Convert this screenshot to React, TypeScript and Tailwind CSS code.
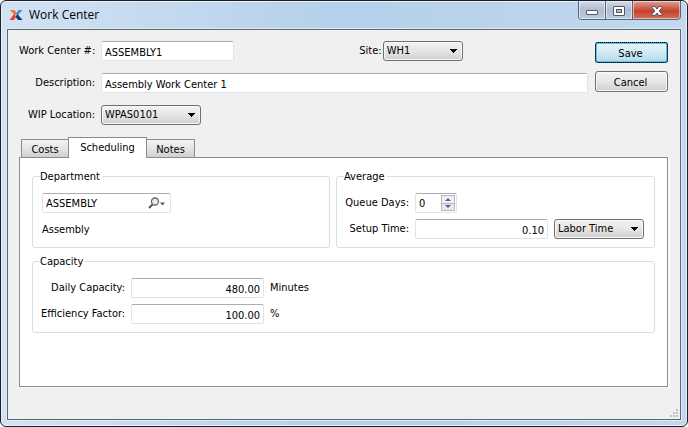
import { useState } from "react";
import type { ReactNode } from "react";

const fieldBase =
  "h-5 min-w-0 rounded-[2px] border border-[#e2e3ea] border-t-[#abadb3] bg-white px-[3px] pt-[2px] text-[11px] leading-4 text-black outline-none";

function Label({ htmlFor, className, children }: { htmlFor: string; className: string; children: ReactNode }) {
  return (
    <label htmlFor={htmlFor} className={`shrink-0 whitespace-nowrap text-right leading-4 ${className}`}>
      {children}
    </label>
  );
}

function Select({ id, value, label, className }: { id: string; value: string; label?: string; className: string }) {
  return (
    <span className={`relative inline-flex h-5 shrink-0 ${className}`}>
      <select
        id={id}
        aria-label={label}
        defaultValue={value}
        className="h-5 w-full appearance-none rounded-[3px] border border-[#707070] bg-linear-to-b from-[#f2f2f2] from-0% via-[#e6e6e6] via-50% to-[#cfcfcf] pl-[3px] pr-4 text-[11px] leading-[18px] text-black shadow-[inset_0_0_0_1px_#f8f8f8] outline-none"
      >
        <option>{value}</option>
      </select>
      <svg className="pointer-events-none absolute right-[6px] top-[8px]" width="7" height="4" viewBox="0 0 7 4" shapeRendering="crispEdges" aria-hidden="true">
        <path d="M0 0h7v1H6v1H5v1H4v1H3V3H2V2H1V1H0z" fill="#000" />
      </svg>
    </span>
  );
}

function Group({ title, children }: { title: string; children: ReactNode }) {
  return (
    <fieldset className="min-w-0 rounded-[3px] border border-[#d5dfe5] px-[7px] pb-2">
      <legend className="h-[14px] pr-[2px] leading-4">{title}</legend>
      <div className="flex flex-col gap-[6px] px-px pt-[10px]">{children}</div>
    </fieldset>
  );
}

function TitleBar() {
  const cap = "flex items-center justify-center border-[#56657a] shadow-[inset_0_0_0_1px_rgba(255,255,255,0.5)]";
  return (
    <header className="flex h-7 items-start">
      <div className="flex h-[26px] flex-1 items-center gap-[6px] pl-[2px] pt-[2px]">
        <svg width="14" height="14" viewBox="0 0 14 14" aria-hidden="true">
          <path d="M1 2h4.500l2.500 3.500-2 2z" fill="#f0763c" />
          <path d="M6.500 6.200 9.500 2H13.500L9 7z" fill="#3d93c8" />
          <path d="M5 6 7 8.700 5 12H.5z" fill="#e04329" />
          <path d="M8.500 6 13.500 12H9L6.500 8.700z" fill="#1b3a6b" />
        </svg>
        <h1 className="font-['Open_Sans','Noto_Sans',sans-serif] text-[12px] leading-4">Work Center</h1>
      </div>
      <div className="flex h-[19px] overflow-hidden rounded-b-[4px] border border-t-0 border-[#56657a]">
        <button type="button" aria-label="Minimize" className={`${cap} w-[27px] border-r bg-linear-to-b from-[#d3dce8] via-[#aebdd0] via-50% to-[#b9cce2]`}>
          <svg width="12" height="6" viewBox="0 0 12 6" className="mt-[5px]" aria-hidden="true">
            <rect x=".5" y=".5" width="11" height="4" rx=".5" fill="#fff" stroke="#535666" />
          </svg>
        </button>
        <button type="button" aria-label="Maximize" className={`${cap} w-[27px] border-r bg-linear-to-b from-[#d3dce8] via-[#aebdd0] via-50% to-[#b9cce2]`}>
          <svg width="12" height="10" viewBox="0 0 12 10" className="mt-px" aria-hidden="true">
            <rect x=".5" y=".5" width="11" height="9" rx=".5" fill="#fff" stroke="#535666" />
            <rect x="3.500" y="3.500" width="5" height="3" fill="#a9bbd0" stroke="#535666" />
          </svg>
        </button>
        <button type="button" aria-label="Close" className={`${cap} w-[47px] bg-linear-to-b from-[#e0a195] from-0% via-[#c4402b] via-55% to-[#d5705a]`}>
          <svg width="12" height="10" viewBox="0 0 12 10" className="mt-px" aria-hidden="true">
            <path d="M1 .5h3L6 3 8 .5h3v1L8.200 5 11 8.500v1H8L6 7 4 9.500H1v-1L3.800 5 1 1.500z" fill="#fff" stroke="#535666" />
          </svg>
        </button>
      </div>
    </header>
  );
}

function Form() {
  return (
    <div className="flex min-w-0 flex-1 flex-col gap-3">
      <div className="flex items-center">
        <Label htmlFor="wc" className="mr-[6px] w-[76px]">Work Center #:</Label>
        <input id="wc" type="text" defaultValue="ASSEMBLY1" className={`${fieldBase} w-[133px]`} />
        <div className="flex flex-1 items-center justify-center">
          <Label htmlFor="site" className="mr-px">Site:</Label>
          <Select id="site" value="WH1" className="w-20" />
        </div>
      </div>
      <div className="flex items-center">
        <Label htmlFor="desc" className="mr-[6px] w-[76px]">Description:</Label>
        <input id="desc" type="text" defaultValue="Assembly Work Center 1" className={`${fieldBase} flex-1`} />
      </div>
      <div className="flex items-center">
        <Label htmlFor="wip" className="mr-[6px] w-[76px]">WIP Location:</Label>
        <Select id="wip" value="WPAS0101" className="w-[100px]" />
      </div>
    </div>
  );
}

function Scheduling() {
  return (
    <div role="tabpanel" aria-label="Scheduling" className="flex flex-1 flex-col gap-[6px] border border-[#898c95] bg-white px-3 pt-[11px] shadow-[2px_1px_0_#fcfcfc]">
      <div className="grid grid-cols-[298fr_319fr] gap-[6px]">
        <Group title="Department">
          <div className="ml-px flex h-5 w-[129px] items-center rounded-[2px] border border-[#e2e3ea] border-t-[#abadb3] pr-1">
            <input type="text" aria-label="Department" defaultValue="ASSEMBLY" className="min-w-0 flex-1 bg-transparent pl-[3px] pt-[2px] text-[11px] leading-4 outline-none" />
            <button type="button" aria-label="Look up department">
              <svg width="18" height="12" viewBox="0 0 18 12" aria-hidden="true">
                <path d="M1 11 5 7" stroke="#555" strokeWidth="2" />
                <circle cx="7" cy="4.500" r="3.500" fill="#e6eaea" stroke="#666" strokeWidth="1.300" />
                <path d="M12 5.500h5l-2.500 3z" fill="#555" />
              </svg>
            </button>
          </div>
          <p className="ml-px h-5 leading-[22px]">Assembly</p>
        </Group>
        <Group title="Average">
          <div className="flex items-center">
            <Label htmlFor="queue" className="mr-[6px] w-16">Queue Days:</Label>
            <div className="flex h-5 w-[42px] rounded-[2px] border border-[#e2e3ea] border-t-[#abadb3]">
              <input id="queue" type="text" defaultValue="0" className="min-w-0 flex-1 bg-transparent pl-[3px] pt-[2px] text-[11px] leading-4 outline-none" />
              <div className="my-px mr-px flex w-[14px] flex-col border border-[#b5b8bd]">
                <button type="button" aria-label="Increase" className="flex flex-1 items-center justify-center border-b border-[#b5b8bd] bg-[#f1f1f1]">
                  <svg width="6" height="3" viewBox="0 0 6 3" aria-hidden="true"><path d="M0 3 3 0l3 3z" fill="#4a61b0" /></svg>
                </button>
                <button type="button" aria-label="Decrease" className="flex flex-1 items-center justify-center bg-[#e9e9e9]">
                  <svg width="6" height="3" viewBox="0 0 6 3" aria-hidden="true"><path d="M0 0h6L3 3z" fill="#4a61b0" /></svg>
                </button>
              </div>
            </div>
          </div>
          <div className="flex items-center">
            <Label htmlFor="setup" className="mr-[6px] w-16">Setup Time:</Label>
            <input id="setup" type="text" defaultValue="0.10" className={`${fieldBase} mr-[6px] flex-1 text-right`} />
            <span className="mr-[2px] flex">
              <Select id="setupKind" label="Setup time type" value="Labor Time" className="w-[90px]" />
            </span>
          </div>
        </Group>
      </div>
      <Group title="Capacity">
        <div className="flex items-center">
          <Label htmlFor="daily" className="mr-[6px] w-[84px]">Daily Capacity:</Label>
          <input id="daily" type="text" defaultValue="480.00" className={`${fieldBase} mr-[6px] w-[133px] text-right`} />
          <span className="leading-4">Minutes</span>
        </div>
        <div className="flex items-center">
          <Label htmlFor="eff" className="mr-[6px] w-[84px]">Efficiency Factor:</Label>
          <input id="eff" type="text" defaultValue="100.00" className={`${fieldBase} mr-[6px] w-[133px] text-right`} />
          <span className="leading-4">%</span>
        </div>
      </Group>
    </div>
  );
}

export default function App() {
  const [tab] = useState("Scheduling");
  const side =
    "h-[18px] border border-b-0 border-[#898c95] bg-linear-to-b from-[#f2f2f2] via-[#e6e6e6] via-50% to-[#cfcfcf] pt-[2px] leading-4";
  return (
    <main className="flex min-h-screen flex-col rounded-[6px] border border-[#1b2028] bg-linear-to-r from-[#d3e2f3] via-[#b4d0ea] via-50% to-[#c3d8ee] px-[6px] pb-[6px] font-['DejaVu_Sans_Condensed','Open_Sans',sans-serif] text-[11px] text-black shadow-[inset_0_0_0_1px_#e8f2fb]">
      <TitleBar />
      <section className="relative flex flex-1 flex-col border border-[#5a6970] bg-[#f0f0f0] pb-8 pl-[11px] pr-3 pt-[11px] ring-1 ring-[#dfebf6]">
        <div className="flex items-start gap-[7px]">
          <Form />
          <div className="flex w-[73px] flex-col gap-2 pt-px">
            <button type="button" className="h-[21px] rounded-[3px] border border-[#2c628b] bg-linear-to-b from-[#e8f5fa] via-[#d2e9f3] via-50% to-[#b4d8e8] pr-[2px] pt-[2px] leading-4 shadow-[inset_0_0_0_1px_#55c7ec] outline-1 -outline-offset-1 outline-dotted outline-black">
              Save
            </button>
            <button type="button" className="h-[21px] rounded-[3px] border border-[#707070] bg-linear-to-b from-[#f2f2f2] via-[#e6e6e6] via-50% to-[#cfcfcf] pr-[2px] pt-[2px] leading-4 shadow-[inset_0_0_0_1px_#f8f8f8]">
              Cancel
            </button>
          </div>
        </div>
        <div role="tablist" className="mt-3 flex items-end pl-[2px]">
          <button type="button" role="tab" aria-selected={tab === "Costs"} className={`${side} w-[47px] border-r-0`}>Costs</button>
          <button type="button" role="tab" aria-selected={tab === "Scheduling"} className="relative -mb-px h-[21px] w-[79px] border border-b-0 border-[#898c95] bg-white leading-4">
            Scheduling
          </button>
          <button type="button" role="tab" aria-selected={tab === "Notes"} className={`${side} w-12 border-l-0`}>Notes</button>
        </div>
        <Scheduling />
        <svg className="absolute bottom-[2px] right-[2px]" width="9" height="9" viewBox="0 0 9 9" aria-hidden="true">
          <path d="M7 1h2v2H7zM4 4h2v2H4zM7 4h2v2H7zM1 7h2v2H1zM4 7h2v2H4zM7 7h2v2H7z" fill="#c2c2c2" />
        </svg>
      </section>
    </main>
  );
}
